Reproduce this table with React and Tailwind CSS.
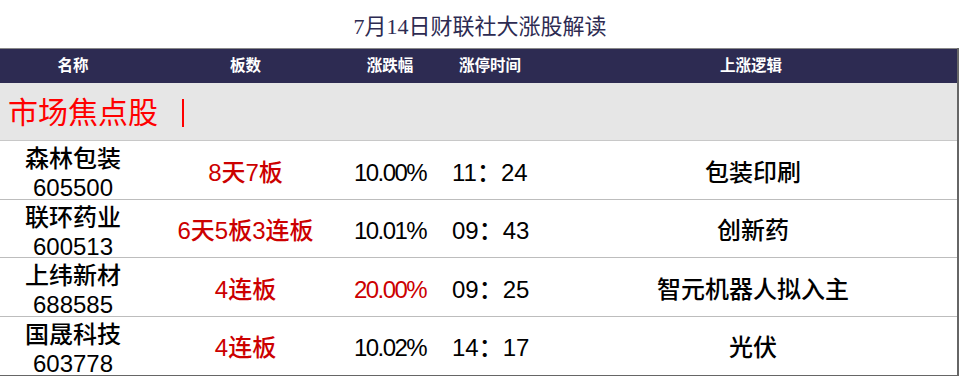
const rows = [
  { name: '森林包装', code: '605500', boards: '8天7板', pct: '10.00%', pctRed: false, time: '11：24', reason: '包装印刷' },
  { name: '联环药业', code: '600513', boards: '6天5板3连板', pct: '10.01%', pctRed: false, time: '09：43', reason: '创新药' },
  { name: '上纬新材', code: '688585', boards: '4连板', pct: '20.00%', pctRed: true, time: '09：25', reason: '智元机器人拟入主' },
  { name: '国晟科技', code: '603778', boards: '4连板', pct: '10.02%', pctRed: false, time: '14：17', reason: '光伏' },
]

const cols = 'grid grid-cols-[146px_199px_90px_110px_1fr]'

export default function App() {
  return (
    <div className="w-[960px] h-[376px] bg-white overflow-hidden font-['Liberation_Sans','Noto_Sans_CJK_SC',sans-serif]">
      <div className="h-[48px] flex items-center justify-center pt-[4px] text-[22px] text-[#2d2b52] font-['Liberation_Serif','Noto_Sans_CJK_SC',serif]">
        7月14日财联社大涨股解读
      </div>

      <div className="w-[959px] border-r-2 border-b-2 border-[#666]">
        {/* header */}
        <div className={`${cols} h-[35px] bg-[#2d2b52] border-t border-[#888] items-center text-white text-[15.5px] font-bold`}>
          <div className="text-center">名称</div>
          <div className="text-center">板数</div>
          <div className="text-center">涨跌幅</div>
          <div className="text-center">涨停时间</div>
          <div className="text-center">上涨逻辑</div>
        </div>

        {/* section */}
        <div className="h-[58px] bg-[#e6e6e6] border-b border-[#c8c8c8] flex items-center pl-[8px] pt-[2px] text-[30px] text-[#ff0000] font-['Liberation_Serif','Noto_Sans_CJK_SC',serif]">
          市场焦点股 <span className="ml-[24px] inline-block w-[2px] h-[28px] bg-[#ff0000]"></span>
        </div>

        {rows.map((r, i) => (
          <div
            key={r.code}
            className={`${cols} h-[58.5px] items-center text-[24px] text-black font-medium ${i < rows.length - 1 ? 'border-b border-[#bdbdbd]' : ''}`}
          >
            <div className="text-center leading-[29px] pt-[3px]">
              <div>{r.name}</div>
              <div>{r.code}</div>
            </div>
            <div className="text-center text-[#cc0000] pt-[2px]">{r.boards}</div>
            <div className={`text-center tracking-[-1.6px] pt-[2px] ${r.pctRed ? 'text-[#cc0000]' : ''}`}>{r.pct}</div>
            <div className="pl-[17px] pt-[2px]">{r.time}</div>
            <div className="text-center pl-[4px] pt-[2px]">{r.reason}</div>
          </div>
        ))}
      </div>
    </div>
  )
}
